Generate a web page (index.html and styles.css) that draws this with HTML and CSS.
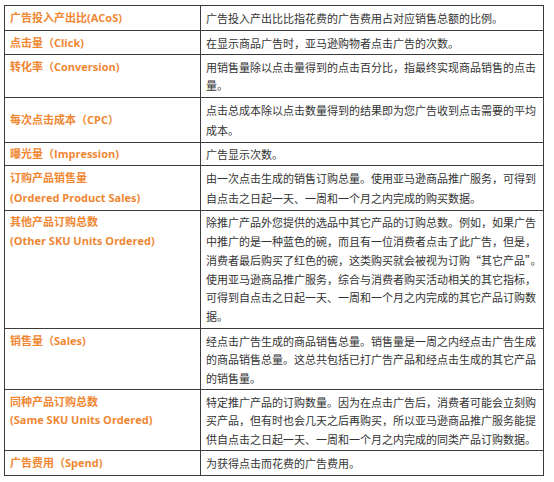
FILE: index.html
```html
<!DOCTYPE html>
<html lang="zh-CN">
<head>
<meta charset="utf-8">
<title>广告指标</title>
<link rel="stylesheet" href="styles.css">
</head>
<body>
<table class="terms">
  <tr class="wide">
    <th>广告投入产出比(ACoS)</th>
    <td>广告投入产出比比指花费的广告费用占对应销售总额的比例。</td>
  </tr>
  <tr>
    <th>点击量（Click)</th>
    <td>在显示商品广告时，亚马逊购物者点击广告的次数。</td>
  </tr>
  <tr>
    <th>转化率（Conversion)</th>
    <td>用销售量除以点击量得到的点击百分比，指最终实现商品销售的点击<br>量。</td>
  </tr>
  <tr class="loose">
    <th class="mid">每次点击成本（CPC）</th>
    <td>点击总成本除以点击数量得到的结果即为您广告收到点击需要的平均<br>成本。</td>
  </tr>
  <tr class="short">
    <th>曝光量（Impression)</th>
    <td>广告显示次数。</td>
  </tr>
  <tr class="loose">
    <th>订购产品销售量<br>(Ordered Product Sales)</th>
    <td>由一次点击生成的销售订购总量。使用亚马逊商品推广服务，可得到<br>自点击之日起一天、一周和一个月之内完成的购买数据。</td>
  </tr>
  <tr class="tall">
    <th>其他产品订购总数<br>(Other SKU Units Ordered)</th>
    <td>除推广产品外您提供的选品中其它产品的订购总数。例如，如果广告<br>中推广的是一种蓝色的碗，而且有一位消费者点击了此广告，但是，<br>消费者最后购买了红色的碗，这类购买就会被视为订购“其它产品”。<br>使用亚马逊商品推广服务，综合与消费者购买活动相关的其它指标，<br>可得到自点击之日起一天、一周和一个月之内完成的其它产品订购数<br>据。</td>
  </tr>
  <tr>
    <th>销售量（Sales)</th>
    <td>经点击广告生成的商品销售总量。销售量是一周之内经点击广告生成<br>的商品销售总量。这总共包括已打广告产品和经点击生成的其它产品<br>的销售量。</td>
  </tr>
  <tr>
    <th>同种产品订购总数<br>(Same SKU Units Ordered)</th>
    <td>特定推广产品的订购数量。因为在点击广告后，消费者可能会立刻购<br>买产品，但有时也会几天之后再购买，所以亚马逊商品推广服务能提<br>供自点击之日起一天、一周和一个月之内完成的同类产品订购数据。</td>
  </tr>
  <tr class="wide">
    <th>广告费用（Spend)</th>
    <td>为获得点击而花费的广告费用。</td>
  </tr>
</table>
</body>
</html>
```
FILE: styles.css
```css
html, body {
  margin: 0;
  padding: 0;
  background: #ffffff;
}

.terms {
  margin: 5px 0 0 4px;
  width: 540px;
  border-collapse: collapse;
  table-layout: fixed;
  font-family: "Noto Sans CJK SC", "Noto Sans", sans-serif;
  font-size: 11px;
  line-height: 18.5px;
}

.terms th,
.terms td {
  border: 1px solid #3c3c3c;
  padding: 2.5px 5px 2px;
  vertical-align: top;
  text-align: left;
  white-space: nowrap;
}

.terms th {
  width: 185px;
  color: #ef8733;
  font-weight: 700;
  font-family: "Open Sans", "Noto Sans CJK SC", sans-serif;
}

.terms th.mid {
  vertical-align: middle;
}

.terms td {
  color: #333333;
  font-weight: 400;
}

.terms .wide th,
.terms .wide td {
  padding-top: 3px;
  padding-bottom: 2.5px;
}

.terms .loose th,
.terms .loose td {
  padding-top: 2.5px;
  padding-bottom: 1.5px;
  line-height: 20px;
}

.terms .short th,
.terms .short td {
  padding-top: 2px;
  padding-bottom: 1.8px;
}

.terms .tall th,
.terms .tall td {
  line-height: 18.8px;
}
```
